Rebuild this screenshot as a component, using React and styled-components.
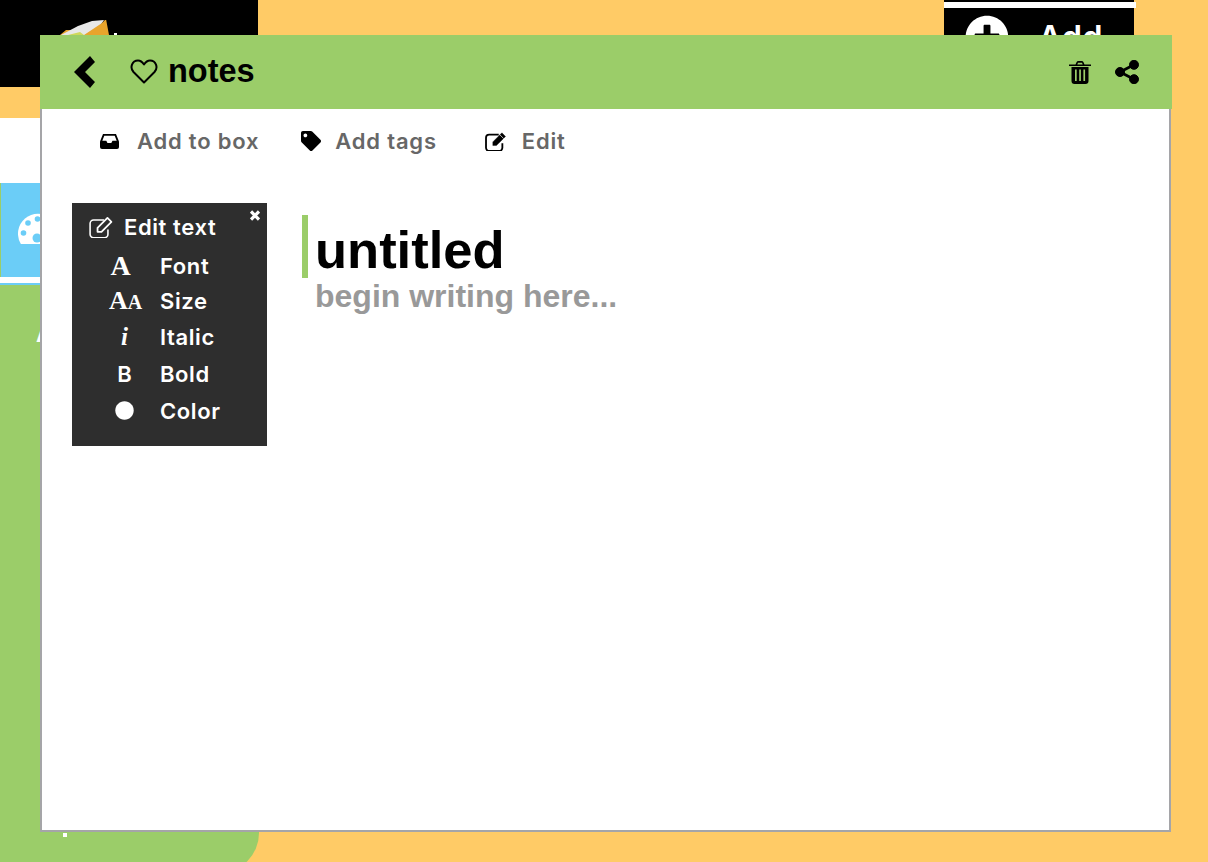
import React from "react";
import styled, { createGlobalStyle } from "styled-components";
import { FaTag, FaCircle, FaPlusCircle } from "react-icons/fa";

const GREEN = "#9bcd69";

const Global = createGlobalStyle`
  html, body { margin: 0; padding: 0; height: 100%; }
  body { background: #ffcb66; font-family: "Liberation Sans", Arial, sans-serif; overflow: hidden; }
`;

const Page = styled.div`
  position: relative; width: 1208px; height: 862px; overflow: hidden;
  display: flex; justify-content: space-between; align-items: flex-start;
`;
const Sidebar = styled.aside`
  width: 258px; height: 873px; flex: none; display: flex; flex-direction: column;
`;
const LogoBlock = styled.div`
  height: 87px; background: #000; flex: none; padding: 20px 0 0 58px; box-sizing: border-box;
`;
const OrangeGap = styled.div`height: 31px; flex: none;`;
const WhiteBand = styled.div`height: ${p => p.$h}px; background: #fff; flex: none;`;
const BlueTile = styled.div`
  height: 94px; flex: none; background: #6bcdf7; border-left: 1px solid ${GREEN};
  padding: 30px 0 0 17px; box-sizing: border-box;
`;
const BlueLine = styled.div`height: 2px; background: #6bcdf7; flex: none;`;
const GreenNav = styled.div`
  flex: 1; background: ${GREEN}; border-bottom-right-radius: 40px; margin-right: -1px;
  display: flex; flex-direction: column; justify-content: space-between;
  padding: 37px 0 36px 36px; color: #fff; font: 700 22px "Inter", sans-serif;
`;
const NavStub = styled.span`display: block; line-height: 24px;`;
const NavDot = styled.span`display: block; width: 4px; height: 4px; background: #fff; margin-left: 27px;`;

const AddButton = styled.div`
  width: 192px; margin-right: 72px; flex: none;
`;
const AddEdge = styled.div`height: 2px; width: 190px; background: #000;`;
const AddStripe = styled.div`height: 6px; background: #fff;`;
const AddRow = styled.div`
  width: 169px; height: 44px; background: #000;
  display: flex; align-items: flex-start; gap: 29px; color: #fff; padding: 7px 0 0 21px;
  font: 600 33px/44px "Inter", sans-serif;
`;

const Modal = styled.section`
  position: absolute; left: 40px; top: 35px; width: 1131px; height: 797px;
  background: #fff; box-sizing: border-box; border: 2px solid #a5a5a8; border-top: 0;
`;
const Header = styled.header`
  height: 74px; margin: 0 -3px 0 -2px; background: ${GREEN}; color: #000;
  display: flex; align-items: center; padding: 0 33px 0 34px;
`;
const Title = styled.h1`
  margin: 0 0 2px 35px; display: flex; align-items: center; gap: 10px;
  font: 700 32.500px "Liberation Sans", Arial, sans-serif;
`;
const HeaderActions = styled.div`
  margin-left: auto; display: flex; align-items: center; gap: 24px;
`;
const Toolbar = styled.nav`
  height: 64px; display: flex; align-items: center; padding: 0 0 0 58px;
`;
const ToolItem = styled.div`
  display: flex; align-items: center; gap: ${p => p.$gap}px; margin-right: ${p => p.$after || 0}px;
  color: #676767; font: 600 22px "Inter", sans-serif; letter-spacing: .8px;
  svg { color: #000; flex: none; }
`;
const Content = styled.div`
  display: flex; align-items: flex-start; padding: 30px 0 0 30px; gap: 35px;
`;
const Panel = styled.div`
  position: relative; width: 195px; height: 243px; background: #2e2e2e; color: #fff; flex: none;
  box-sizing: border-box; padding: 11px 0 0 17px; font: 600 22px "Inter", sans-serif; letter-spacing: .6px;
`;
const Close = styled.span`
  position: absolute; right: 7px; top: 7px; display: flex;
`;
const PanelHead = styled.div`
  display: flex; align-items: center; gap: 11px; height: 26px; margin-bottom: 8.500px;
`;
const PanelRow = styled.div`
  display: grid; grid-template-columns: 71px 1fr; align-items: center; height: ${p => p.$h}px;
`;
const Glyph = styled.span`
  display: flex; justify-content: center; align-items: baseline; font: ${p => p.$font || '700 28px "Liberation Serif", serif'};
  letter-spacing: 0; margin-left: ${p => p.$shift || 0}px;
`;
const BigA = styled.span`font-size: 26px;`;
const SmallA = styled.span`font-size: 20px;`;
const Editor = styled.div`padding-top: 12px;`;
const TitleLine = styled.div`
  border-left: 6px solid ${GREEN}; height: 63px; padding-left: 7px;
  font: 700 52.500px/70px "Liberation Sans", Arial, sans-serif; color: #000;
`;
const Placeholder = styled.div`
  padding-left: 13px; font: 700 32px/37px "Liberation Sans", Arial, sans-serif; color: #999;
`;

const Chevron = () => (
  <svg width="21" height="32" viewBox="0 0 21 32" fill="#000">
    <polygon points="0,16 16,0 21,6 11,16 21,26 16,32" />
  </svg>
);
const Heart = () => (
  <svg width="28" height="25" viewBox="0 0 28 25" fill="none" stroke="#000" strokeWidth="2" strokeLinejoin="round">
    <path d="M14 23.500 L3.500 13 C-0.500 8.500 2 1.500 8 1.500 C11 1.500 13 4 14 5.500 C15 4 17 1.500 20 1.500 C26 1.500 28.500 8.500 24.500 13 Z" />
  </svg>
);
const Trash = () => (
  <svg width="22" height="23" viewBox="0 0 22 23" fill="#000">
    <path fillRule="evenodd" d="M0 3.500h6.500L7.500 1.200Q8 0 9.500 0h3Q14 0 14.500 1.200L15.500 3.500H22V5H0ZM8.300 3.500h5.400L13 1.800H9Z" />
    <path fillRule="evenodd" d="M2.500 6h17v14q0 3-3 3h-11q-3 0-3-3ZM6 8.500v11.500h1.700V8.500ZM10.200 8.500v11.500h1.700V8.500ZM14.400 8.500v11.500h1.700V8.500Z" />
  </svg>
);
const Share = () => (
  <svg width="24" height="24" viewBox="0 0 24 24" fill="#000" stroke="#000">
    <circle cx="5" cy="12" r="4.500" />
    <circle cx="19" cy="4.800" r="4.500" />
    <circle cx="19" cy="19.200" r="4.500" />
    <path d="M5 12 L19 4.800 M5 12 L19 19.200" strokeWidth="2.800" fill="none" />
  </svg>
);
const Inbox = () => (
  <svg width="19" height="15" viewBox="0 0 19 15">
    <path d="M3 0h13l3 7.500V13q0 2-2 2H2q-2 0-2-2V7.500Z" fill="#000" />
    <path d="M4.300 1.800h10.400l2 5h-4.200l-1.200 2.200H7.500L6.300 6.800H2.300Z" fill="#fff" />
  </svg>
);
const Palette = () => (
  <svg width="40" height="31" viewBox="0 0 40 31">
    <path d="M2.900 31 A20 20 0 1 1 37.100 31Z" fill="#fff" />
    <g fill="#6bcdf7">
      <circle cx="10" cy="10" r="2.800" />
      <circle cx="19.500" cy="6" r="2.800" />
      <circle cx="5.500" cy="20" r="2.800" />
      <circle cx="19" cy="25" r="4.500" />
    </g>
  </svg>
);
const EditIcon = ({ size, outline }) => (
  <svg width={size} height={size * 0.95} viewBox="0 0 24 23" fill="none" stroke="currentColor" strokeLinejoin="round">
    <path d="M19 13.500v5a3.500 3.500 0 0 1-3.500 3.500H4.500A3.500 3.500 0 0 1 1 18.500V7.500A3.500 3.500 0 0 1 4.500 4H15" strokeWidth={outline ? 1.600 : 2} />
    <path d="M8.500 12 L18.500 2 L22.500 6 L12.500 16 L8.500 16Z" fill={outline ? "none" : "currentColor"} strokeWidth={outline ? 1.800 : 0.400} />
    {!outline && <path d="M16.300 4.200 L20.300 8.200" stroke="#fff" strokeWidth="0.800" />}
  </svg>
);
const CloseMark = () => (
  <svg width="10" height="11" viewBox="0 0 10 11" stroke="#fff" strokeWidth="3.200">
    <path d="M1 1.500 L9 9.500 M9 1.500 L1 9.500" />
  </svg>
);
const LogoArt = () => (
  <svg width="60" height="20" viewBox="0 0 60 20">
    <path d="M2 15 L8 10 L14 10 L8 15Z" fill="#e8a42c" />
    <path d="M3 15 L20 6 L34 1 L46 0 L36 15Z" fill="#e8e8e8" />
    <path d="M26 15 L44 3 L48 -1 L51 15Z" fill="#e8a42c" />
    <path d="M10 15 L22 12 L26 15Z" fill="#cfd85a" />
    <rect x="56" y="13" width="3" height="2" fill="#fff" />
  </svg>
);

export default function App() {
  return (
    <Page>
      <Global />
      <Sidebar>
        <LogoBlock><LogoArt /></LogoBlock>
        <OrangeGap />
        <WhiteBand $h={65} />
        <BlueTile><Palette /></BlueTile>
        <WhiteBand $h={6} />
        <BlueLine />
        <GreenNav>
          <NavStub>A</NavStub>
          <NavDot />
        </GreenNav>
      </Sidebar>
      <AddButton>
        <AddEdge />
        <AddStripe />
        <AddRow><FaPlusCircle size={44} />Add</AddRow>
      </AddButton>
      <Modal>
        <Header>
          <Chevron />
          <Title><Heart />notes</Title>
          <HeaderActions>
            <Trash />
            <Share />
          </HeaderActions>
        </Header>
        <Toolbar>
          <ToolItem $gap={18} $after={42}><Inbox />Add to box</ToolItem>
          <ToolItem $gap={14} $after={48}><FaTag size={20} />Add tags</ToolItem>
          <ToolItem $gap={15}><EditIcon size={22} />Edit</ToolItem>
        </Toolbar>
        <Content>
          <Panel>
            <Close><CloseMark /></Close>
            <PanelHead><EditIcon size={24} outline />Edit text</PanelHead>
            <PanelRow $h={35}><Glyph $shift={-8}>A</Glyph>Font</PanelRow>
            <PanelRow $h={35}><Glyph $shift={2}><BigA>A</BigA><SmallA>A</SmallA></Glyph>Size</PanelRow>
            <PanelRow $h={37}><Glyph $font={'italic 700 25px "Liberation Serif", serif'}>i</Glyph>Italic</PanelRow>
            <PanelRow $h={37}><Glyph $font={'600 22px "Inter", sans-serif'}>B</Glyph>Bold</PanelRow>
            <PanelRow $h={36}><Glyph><FaCircle size={19} /></Glyph>Color</PanelRow>
          </Panel>
          <Editor>
            <TitleLine>untitled</TitleLine>
            <Placeholder>begin writing here...</Placeholder>
          </Editor>
        </Content>
      </Modal>
    </Page>
  );
}
